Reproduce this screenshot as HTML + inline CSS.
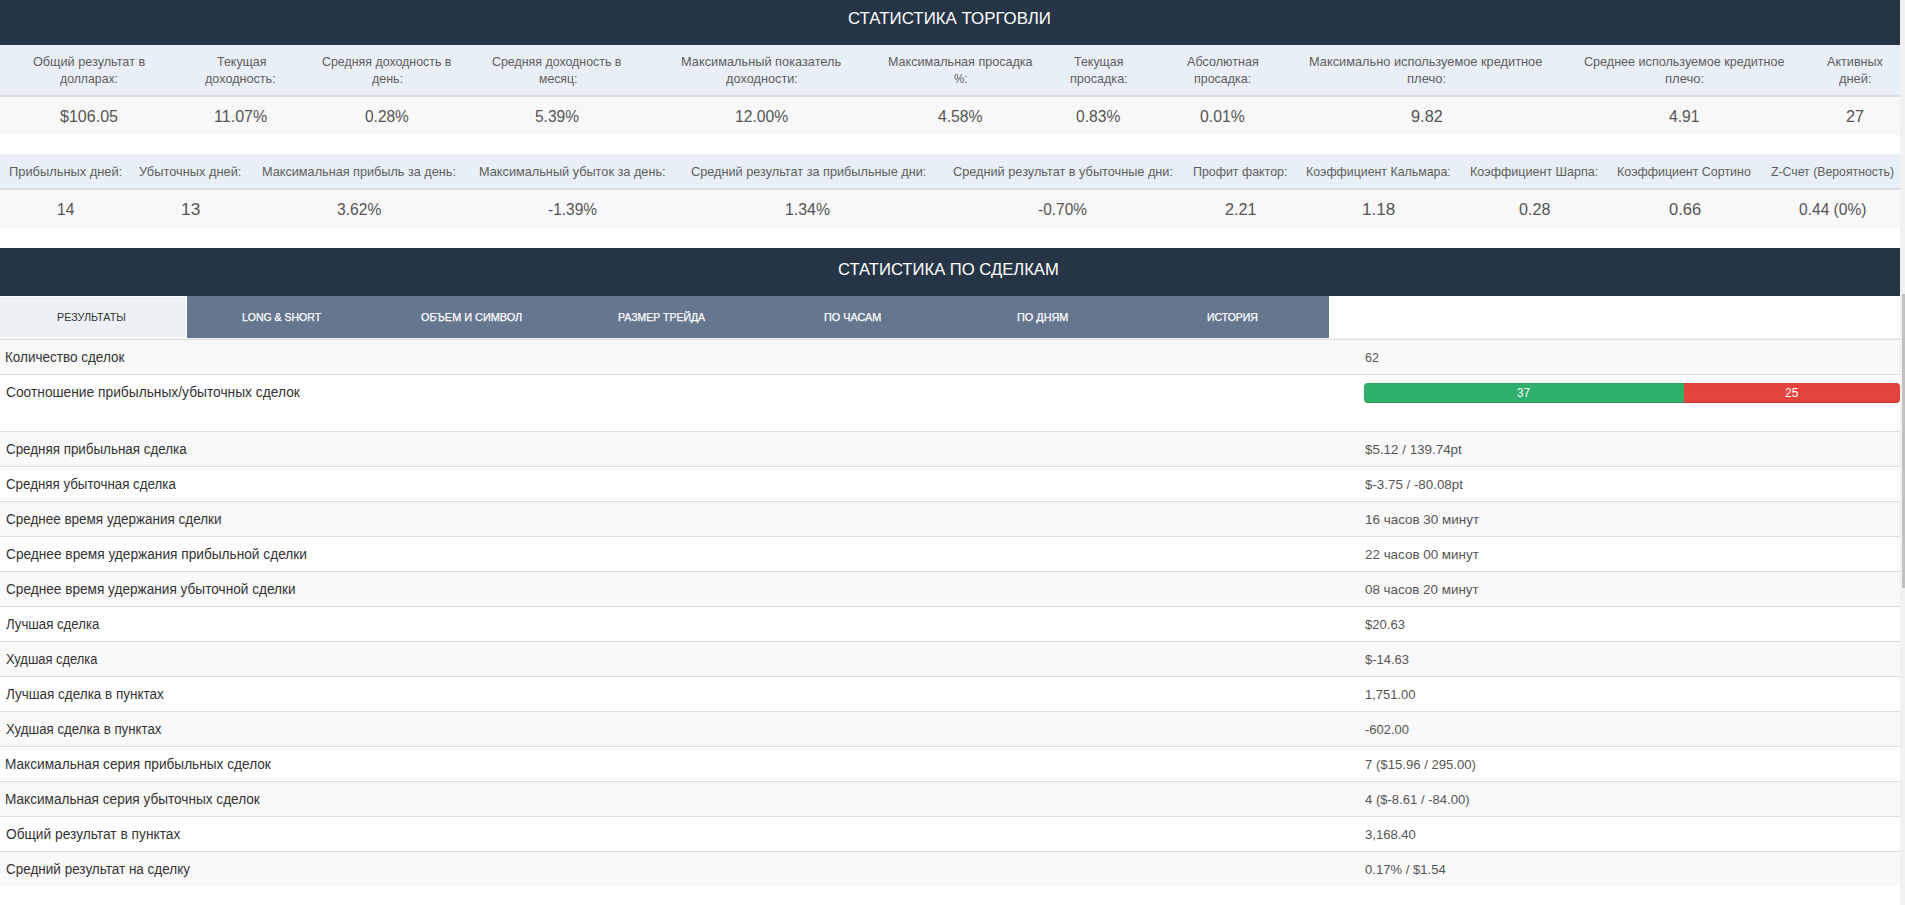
<!DOCTYPE html>
<html><head><meta charset="utf-8"><title>Статистика</title>
<style>
html,body{margin:0;padding:0;}
body{width:1905px;height:905px;overflow:hidden;position:relative;background:#fff;font-family:"Liberation Sans",sans-serif;}
.r{position:absolute;}
.t{position:absolute;white-space:nowrap;transform-origin:0 0;}
.tab{-webkit-text-stroke:0.25px #fff;}
.b{display:inline-block;width:0;height:0;vertical-align:baseline;}
</style></head><body>
<div class="r" style="left:0px;top:0px;width:1900px;height:45px;background:#263545;"></div>
<div class="r" style="left:0px;top:45px;width:1900px;height:50px;background:#e8eff6;"></div>
<div class="r" style="left:0px;top:95px;width:1900px;height:2px;background:#dadcdf;"></div>
<div class="r" style="left:0px;top:97px;width:1900px;height:38px;background:#f8f8f8;"></div>
<div class="r" style="left:0px;top:154px;width:1900px;height:34px;background:#e8eff6;"></div>
<div class="r" style="left:0px;top:188px;width:1900px;height:2px;background:#dadcdf;"></div>
<div class="r" style="left:0px;top:190px;width:1900px;height:38px;background:#f8f8f8;"></div>
<div class="r" style="left:0px;top:248px;width:1900px;height:48px;background:#263545;"></div>
<div class="r" style="left:187px;top:296px;width:1142px;height:42px;background:#66768f;"></div>
<div class="r" style="left:0px;top:296px;width:187px;height:42px;background:#edf1f5;box-shadow:inset 0 1px 0 #fff,inset -1px 0 0 #fff,inset 0 -1px 0 #fff"></div>
<div class="r" style="left:0px;top:338px;width:1900px;height:1px;background:#eef0f3;"></div>
<div class="r" style="left:0px;top:339px;width:1900px;height:1px;background:#ddd;"></div>
<div class="r" style="left:0px;top:340px;width:1900px;height:34px;background:#f9f9f9;"></div>
<div class="r" style="left:0px;top:374px;width:1900px;height:1px;background:#ddd;"></div>
<div class="r" style="left:0px;top:375px;width:1900px;height:56px;background:#fff;"></div>
<div class="r" style="left:0px;top:431px;width:1900px;height:1px;background:#ddd;"></div>
<div class="r" style="left:0px;top:432px;width:1900px;height:34px;background:#f9f9f9;"></div>
<div class="r" style="left:0px;top:466px;width:1900px;height:1px;background:#ddd;"></div>
<div class="r" style="left:0px;top:467px;width:1900px;height:34px;background:#fff;"></div>
<div class="r" style="left:0px;top:501px;width:1900px;height:1px;background:#ddd;"></div>
<div class="r" style="left:0px;top:502px;width:1900px;height:34px;background:#f9f9f9;"></div>
<div class="r" style="left:0px;top:536px;width:1900px;height:1px;background:#ddd;"></div>
<div class="r" style="left:0px;top:537px;width:1900px;height:34px;background:#fff;"></div>
<div class="r" style="left:0px;top:571px;width:1900px;height:1px;background:#ddd;"></div>
<div class="r" style="left:0px;top:572px;width:1900px;height:34px;background:#f9f9f9;"></div>
<div class="r" style="left:0px;top:606px;width:1900px;height:1px;background:#ddd;"></div>
<div class="r" style="left:0px;top:607px;width:1900px;height:34px;background:#fff;"></div>
<div class="r" style="left:0px;top:641px;width:1900px;height:1px;background:#ddd;"></div>
<div class="r" style="left:0px;top:642px;width:1900px;height:34px;background:#f9f9f9;"></div>
<div class="r" style="left:0px;top:676px;width:1900px;height:1px;background:#ddd;"></div>
<div class="r" style="left:0px;top:677px;width:1900px;height:34px;background:#fff;"></div>
<div class="r" style="left:0px;top:711px;width:1900px;height:1px;background:#ddd;"></div>
<div class="r" style="left:0px;top:712px;width:1900px;height:34px;background:#f9f9f9;"></div>
<div class="r" style="left:0px;top:746px;width:1900px;height:1px;background:#ddd;"></div>
<div class="r" style="left:0px;top:747px;width:1900px;height:34px;background:#fff;"></div>
<div class="r" style="left:0px;top:781px;width:1900px;height:1px;background:#ddd;"></div>
<div class="r" style="left:0px;top:782px;width:1900px;height:34px;background:#f9f9f9;"></div>
<div class="r" style="left:0px;top:816px;width:1900px;height:1px;background:#ddd;"></div>
<div class="r" style="left:0px;top:817px;width:1900px;height:34px;background:#fff;"></div>
<div class="r" style="left:0px;top:851px;width:1900px;height:1px;background:#ddd;"></div>
<div class="r" style="left:0px;top:852px;width:1900px;height:34px;background:#f9f9f9;"></div>
<div class="r" style="left:1364px;top:383px;width:536px;height:20px;border-radius:4px;overflow:hidden;background:#f5f5f5"><div class="r" style="left:0;top:0;width:320px;height:20px;background:#2fb06c;box-shadow:inset 0 -1px 0 rgba(0,0,0,.15)"></div><div class="r" style="left:320px;top:0;width:216px;height:20px;background:#e5443d;box-shadow:inset 0 -1px 0 rgba(0,0,0,.15)"></div><div class="r" style="left:0;top:0;width:536px;height:20px;box-shadow:inset 0 1px 2px rgba(0,0,0,.1)"></div></div>
<div class="r" style="left:1900px;top:0px;width:5px;height:905px;background:#f1f1f1;"></div>
<div class="r" style="left:1902px;top:294px;width:3px;height:294px;background:#c1c1c1;"></div>
<div id="i0" class="t " style="left:847.60px;top:7.70px;font-size:16.8px;line-height:21px;color:#fff;transform:scaleX(1.0049)">СТАТИСТИКА ТОРГОВЛИ</div>
<div id="i1" class="t " style="left:838.40px;top:259.01px;font-size:16.8px;line-height:21px;color:#fff;transform:scaleX(0.9900)">СТАТИСТИКА ПО СДЕЛКАМ</div>
<div id="i2" class="t " style="left:32.80px;top:53.81px;font-size:12.6px;line-height:16px;color:#5e5e5e;transform:scaleX(1.0056)">Общий результат в</div>
<div id="i3" class="t " style="left:60.10px;top:70.81px;font-size:12.6px;line-height:16px;color:#5e5e5e;transform:scaleX(0.9732)">долларах:</div>
<div id="i4" class="t " style="left:216.70px;top:53.81px;font-size:12.6px;line-height:16px;color:#5e5e5e;transform:scaleX(0.9878)">Текущая</div>
<div id="i5" class="t " style="left:205.30px;top:70.81px;font-size:12.6px;line-height:16px;color:#5e5e5e;transform:scaleX(1.0025)">доходность:</div>
<div id="i6" class="t " style="left:322.30px;top:53.81px;font-size:12.6px;line-height:16px;color:#5e5e5e;transform:scaleX(0.9841)">Средняя доходность в</div>
<div id="i7" class="t " style="left:371.90px;top:70.81px;font-size:12.6px;line-height:16px;color:#5e5e5e;transform:scaleX(0.9913)">день:</div>
<div id="i8" class="t " style="left:492.35px;top:53.81px;font-size:12.6px;line-height:16px;color:#5e5e5e;transform:scaleX(0.9841)">Средняя доходность в</div>
<div id="i9" class="t " style="left:538.50px;top:70.81px;font-size:12.6px;line-height:16px;color:#5e5e5e;transform:scaleX(0.9694)">месяц:</div>
<div id="i10" class="t " style="left:680.79px;top:53.81px;font-size:12.6px;line-height:16px;color:#5e5e5e;transform:scaleX(1.0148)">Максимальный показатель</div>
<div id="i11" class="t " style="left:725.80px;top:70.81px;font-size:12.6px;line-height:16px;color:#5e5e5e;transform:scaleX(1.0128)">доходности:</div>
<div id="i12" class="t " style="left:887.50px;top:53.81px;font-size:12.6px;line-height:16px;color:#5e5e5e;transform:scaleX(0.9991)">Максимальная просадка</div>
<div id="i13" class="t " style="left:953.60px;top:70.81px;font-size:12.6px;line-height:16px;color:#5e5e5e;transform:scaleX(0.9156)">%:</div>
<div id="i14" class="t " style="left:1073.70px;top:53.81px;font-size:12.6px;line-height:16px;color:#5e5e5e;transform:scaleX(0.9878)">Текущая</div>
<div id="i15" class="t " style="left:1069.50px;top:70.81px;font-size:12.6px;line-height:16px;color:#5e5e5e;transform:scaleX(0.9971)">просадка:</div>
<div id="i16" class="t " style="left:1187.00px;top:53.81px;font-size:12.6px;line-height:16px;color:#5e5e5e;transform:scaleX(1.0017)">Абсолютная</div>
<div id="i17" class="t " style="left:1194.40px;top:70.81px;font-size:12.6px;line-height:16px;color:#5e5e5e;transform:scaleX(0.9901)">просадка:</div>
<div id="i18" class="t " style="left:1309.48px;top:53.81px;font-size:12.6px;line-height:16px;color:#5e5e5e;transform:scaleX(1.0155)">Максимально используемое кредитное</div>
<div id="i19" class="t " style="left:1407.30px;top:70.81px;font-size:12.6px;line-height:16px;color:#5e5e5e;transform:scaleX(1.0343)">плечо:</div>
<div id="i20" class="t " style="left:1584.40px;top:53.81px;font-size:12.6px;line-height:16px;color:#5e5e5e;transform:scaleX(0.9988)">Среднее используемое кредитное</div>
<div id="i21" class="t " style="left:1665.30px;top:70.81px;font-size:12.6px;line-height:16px;color:#5e5e5e;transform:scaleX(1.0370)">плечо:</div>
<div id="i22" class="t " style="left:1826.70px;top:53.81px;font-size:12.6px;line-height:16px;color:#5e5e5e;transform:scaleX(1.0009)">Активных</div>
<div id="i23" class="t " style="left:1839.00px;top:70.81px;font-size:12.6px;line-height:16px;color:#5e5e5e;transform:scaleX(1.0210)">дней:</div>
<div id="i24" class="t " style="left:60.10px;top:106.52px;font-size:15.6px;line-height:20px;color:#545454;transform:scaleX(1.0283)">$106.05</div>
<div id="i25" class="t " style="left:213.67px;top:106.52px;font-size:15.6px;line-height:20px;color:#545454;transform:scaleX(1.0302)">11.07%</div>
<div id="i26" class="t " style="left:365.20px;top:106.52px;font-size:15.6px;line-height:20px;color:#545454;transform:scaleX(0.9921)">0.28%</div>
<div id="i27" class="t " style="left:534.80px;top:106.52px;font-size:15.6px;line-height:20px;color:#545454;transform:scaleX(0.9944)">5.39%</div>
<div id="i28" class="t " style="left:734.59px;top:106.52px;font-size:15.6px;line-height:20px;color:#545454;transform:scaleX(1.0073)">12.00%</div>
<div id="i29" class="t " style="left:937.60px;top:106.52px;font-size:15.6px;line-height:20px;color:#545454;transform:scaleX(1.0079)">4.58%</div>
<div id="i30" class="t " style="left:1075.80px;top:106.52px;font-size:15.6px;line-height:20px;color:#545454;transform:scaleX(1.0034)">0.83%</div>
<div id="i31" class="t " style="left:1200.00px;top:106.52px;font-size:15.6px;line-height:20px;color:#545454;transform:scaleX(1.0101)">0.01%</div>
<div id="i32" class="t " style="left:1411.30px;top:106.52px;font-size:15.6px;line-height:20px;color:#545454;transform:scaleX(1.0479)">9.82</div>
<div id="i33" class="t " style="left:1668.80px;top:106.52px;font-size:15.6px;line-height:20px;color:#545454;transform:scaleX(1.0075)">4.91</div>
<div id="i34" class="t " style="left:1846.00px;top:106.52px;font-size:15.6px;line-height:20px;color:#545454;transform:scaleX(1.0376)">27</div>
<div id="i35" class="t " style="left:9.38px;top:163.92px;font-size:12.6px;line-height:16px;color:#5e5e5e;transform:scaleX(1.0209)">Прибыльных дней:</div>
<div id="i36" class="t " style="left:139.40px;top:163.92px;font-size:12.6px;line-height:16px;color:#5e5e5e;transform:scaleX(1.0185)">Убыточных дней:</div>
<div id="i37" class="t " style="left:261.79px;top:163.92px;font-size:12.6px;line-height:16px;color:#5e5e5e;transform:scaleX(1.0066)">Максимальная прибыль за день:</div>
<div id="i38" class="t " style="left:479.19px;top:163.92px;font-size:12.6px;line-height:16px;color:#5e5e5e;transform:scaleX(1.0103)">Максимальный убыток за день:</div>
<div id="i39" class="t " style="left:691.30px;top:163.92px;font-size:12.6px;line-height:16px;color:#5e5e5e;transform:scaleX(1.0087)">Средний результат за прибыльные дни:</div>
<div id="i40" class="t " style="left:953.10px;top:163.92px;font-size:12.6px;line-height:16px;color:#5e5e5e;transform:scaleX(1.0102)">Средний результат в убыточные дни:</div>
<div id="i41" class="t " style="left:1193.42px;top:163.92px;font-size:12.6px;line-height:16px;color:#5e5e5e;transform:scaleX(0.9844)">Профит фактор:</div>
<div id="i42" class="t " style="left:1306.22px;top:163.92px;font-size:12.6px;line-height:16px;color:#5e5e5e;transform:scaleX(0.9821)">Коэффициент Кальмара:</div>
<div id="i43" class="t " style="left:1470.10px;top:163.92px;font-size:12.6px;line-height:16px;color:#5e5e5e;transform:scaleX(0.9955)">Коэффициент Шарпа:</div>
<div id="i44" class="t " style="left:1617.01px;top:163.92px;font-size:12.6px;line-height:16px;color:#5e5e5e;transform:scaleX(0.9868)">Коэффициент Сортино</div>
<div id="i45" class="t " style="left:1771.10px;top:163.92px;font-size:12.6px;line-height:16px;color:#5e5e5e;transform:scaleX(0.9744)">Z-Счет (Вероятность)</div>
<div id="i46" class="t " style="left:56.99px;top:199.82px;font-size:15.6px;line-height:20px;color:#545454;transform:scaleX(1.0076)">14</div>
<div id="i47" class="t " style="left:180.89px;top:199.82px;font-size:15.6px;line-height:20px;color:#545454;transform:scaleX(1.1102)">13</div>
<div id="i48" class="t " style="left:336.80px;top:199.82px;font-size:15.6px;line-height:20px;color:#545454;transform:scaleX(1.0011)">3.62%</div>
<div id="i49" class="t " style="left:548.20px;top:199.82px;font-size:15.6px;line-height:20px;color:#545454;transform:scaleX(0.9911)">-1.39%</div>
<div id="i50" class="t " style="left:785.28px;top:199.82px;font-size:15.6px;line-height:20px;color:#545454;transform:scaleX(1.0173)">1.34%</div>
<div id="i51" class="t " style="left:1038.30px;top:199.82px;font-size:15.6px;line-height:20px;color:#545454;transform:scaleX(0.9911)">-0.70%</div>
<div id="i52" class="t " style="left:1225.30px;top:199.82px;font-size:15.6px;line-height:20px;color:#545454;transform:scaleX(1.0378)">2.21</div>
<div id="i53" class="t " style="left:1362.01px;top:199.82px;font-size:15.6px;line-height:20px;color:#545454;transform:scaleX(1.0949)">1.18</div>
<div id="i54" class="t " style="left:1519.30px;top:199.82px;font-size:15.6px;line-height:20px;color:#545454;transform:scaleX(1.0345)">0.28</div>
<div id="i55" class="t " style="left:1668.80px;top:199.82px;font-size:15.6px;line-height:20px;color:#545454;transform:scaleX(1.0580)">0.66</div>
<div id="i56" class="t " style="left:1798.70px;top:199.82px;font-size:15.6px;line-height:20px;color:#545454;transform:scaleX(0.9983)">0.44 (0%)</div>
<div id="i57" class="t " style="left:57.10px;top:309.91px;font-size:11.0px;line-height:14px;color:#333;transform:scaleX(0.9804)">РЕЗУЛЬТАТЫ</div>
<div id="i58" class="t tab" style="left:241.60px;top:309.91px;font-size:11.0px;line-height:14px;color:#fff;transform:scaleX(0.9531)">LONG &amp; SHORT</div>
<div id="i59" class="t tab" style="left:421.20px;top:309.91px;font-size:11.0px;line-height:14px;color:#fff;transform:scaleX(0.9897)">ОБЪЕМ И СИМВОЛ</div>
<div id="i60" class="t tab" style="left:618.20px;top:309.91px;font-size:11.0px;line-height:14px;color:#fff;transform:scaleX(0.9522)">РАЗМЕР ТРЕЙДА</div>
<div id="i61" class="t tab" style="left:823.80px;top:309.91px;font-size:11.0px;line-height:14px;color:#fff;transform:scaleX(0.9865)">ПО ЧАСАМ</div>
<div id="i62" class="t tab" style="left:1017.00px;top:309.91px;font-size:11.0px;line-height:14px;color:#fff;transform:scaleX(0.9874)">ПО ДНЯМ</div>
<div id="i63" class="t tab" style="left:1207.40px;top:309.91px;font-size:11.0px;line-height:14px;color:#fff;transform:scaleX(0.9531)">ИСТОРИЯ</div>
<div id="i64" class="t " style="left:5.04px;top:348.01px;font-size:14.0px;line-height:18px;color:#333;transform:scaleX(0.9638)">Количество сделок</div>
<div id="i65" class="t " style="left:1364.60px;top:350.01px;font-size:12.9px;line-height:16px;color:#555;transform:scaleX(0.9669)">62</div>
<div id="i66" class="t " style="left:6.00px;top:383.01px;font-size:14.0px;line-height:18px;color:#333;transform:scaleX(0.9839)">Соотношение прибыльных/убыточных сделок</div>
<div id="i67" class="t " style="left:6.00px;top:440.01px;font-size:14.0px;line-height:18px;color:#333;transform:scaleX(0.9559)">Средняя прибыльная сделка</div>
<div id="i68" class="t " style="left:1364.60px;top:442.01px;font-size:12.9px;line-height:16px;color:#555;transform:scaleX(1.0385)">$5.12 / 139.74pt</div>
<div id="i69" class="t " style="left:6.00px;top:475.01px;font-size:14.0px;line-height:18px;color:#333;transform:scaleX(0.9515)">Средняя убыточная сделка</div>
<div id="i70" class="t " style="left:1364.60px;top:477.01px;font-size:12.9px;line-height:16px;color:#555;transform:scaleX(1.0346)">$-3.75 / -80.08pt</div>
<div id="i71" class="t " style="left:6.00px;top:510.01px;font-size:14.0px;line-height:18px;color:#333;transform:scaleX(0.9624)">Среднее время удержания сделки</div>
<div id="i72" class="t " style="left:1364.60px;top:512.01px;font-size:12.9px;line-height:16px;color:#555;transform:scaleX(1.0425)">16 часов 30 минут</div>
<div id="i73" class="t " style="left:6.00px;top:545.01px;font-size:14.0px;line-height:18px;color:#333;transform:scaleX(0.9774)">Среднее время удержания прибыльной сделки</div>
<div id="i74" class="t " style="left:1364.60px;top:547.01px;font-size:12.9px;line-height:16px;color:#555;transform:scaleX(1.0398)">22 часов 00 минут</div>
<div id="i75" class="t " style="left:6.00px;top:580.01px;font-size:14.0px;line-height:18px;color:#333;transform:scaleX(0.9738)">Среднее время удержания убыточной сделки</div>
<div id="i76" class="t " style="left:1364.60px;top:582.01px;font-size:12.9px;line-height:16px;color:#555;transform:scaleX(1.0380)">08 часов 20 минут</div>
<div id="i77" class="t " style="left:6.00px;top:615.01px;font-size:14.0px;line-height:18px;color:#333;transform:scaleX(0.9424)">Лучшая сделка</div>
<div id="i78" class="t " style="left:1364.60px;top:617.01px;font-size:12.9px;line-height:16px;color:#555;transform:scaleX(1.0138)">$20.63</div>
<div id="i79" class="t " style="left:6.00px;top:650.01px;font-size:14.0px;line-height:18px;color:#333;transform:scaleX(0.9233)">Худшая сделка</div>
<div id="i80" class="t " style="left:1364.60px;top:652.01px;font-size:12.9px;line-height:16px;color:#555;transform:scaleX(1.0080)">$-14.63</div>
<div id="i81" class="t " style="left:6.00px;top:685.01px;font-size:14.0px;line-height:18px;color:#333;transform:scaleX(0.9630)">Лучшая сделка в пунктах</div>
<div id="i82" class="t " style="left:1364.60px;top:687.01px;font-size:12.9px;line-height:16px;color:#555;transform:scaleX(1.0078)">1,751.00</div>
<div id="i83" class="t " style="left:6.00px;top:720.01px;font-size:14.0px;line-height:18px;color:#333;transform:scaleX(0.9484)">Худшая сделка в пунктах</div>
<div id="i84" class="t " style="left:1364.60px;top:722.01px;font-size:12.9px;line-height:16px;color:#555;transform:scaleX(1.0057)">-602.00</div>
<div id="i85" class="t " style="left:5.02px;top:755.01px;font-size:14.0px;line-height:18px;color:#333;transform:scaleX(0.9752)">Максимальная серия прибыльных сделок</div>
<div id="i86" class="t " style="left:1364.60px;top:757.01px;font-size:12.9px;line-height:16px;color:#555;transform:scaleX(1.0189)">7 ($15.96 / 295.00)</div>
<div id="i87" class="t " style="left:5.03px;top:790.01px;font-size:14.0px;line-height:18px;color:#333;transform:scaleX(0.9722)">Максимальная серия убыточных сделок</div>
<div id="i88" class="t " style="left:1364.60px;top:792.01px;font-size:12.9px;line-height:16px;color:#555;transform:scaleX(1.0137)">4 ($-8.61 / -84.00)</div>
<div id="i89" class="t " style="left:6.00px;top:825.01px;font-size:14.0px;line-height:18px;color:#333;transform:scaleX(0.9817)">Общий результат в пунктах</div>
<div id="i90" class="t " style="left:1364.60px;top:827.01px;font-size:12.9px;line-height:16px;color:#555;transform:scaleX(1.0118)">3,168.40</div>
<div id="i91" class="t " style="left:6.00px;top:860.01px;font-size:14.0px;line-height:18px;color:#333;transform:scaleX(0.9645)">Средний результат на сделку</div>
<div id="i92" class="t " style="left:1364.60px;top:862.01px;font-size:12.9px;line-height:16px;color:#555;transform:scaleX(1.0141)">0.17% / $1.54</div>
<div id="i93" class="t " style="left:1517.10px;top:386.01px;font-size:12.0px;line-height:15px;color:#fff;transform:scaleX(0.9653)">37</div>
<div id="i94" class="t " style="left:1784.90px;top:386.01px;font-size:12.0px;line-height:15px;color:#fff;transform:scaleX(1.0092)">25</div>
</body></html>
